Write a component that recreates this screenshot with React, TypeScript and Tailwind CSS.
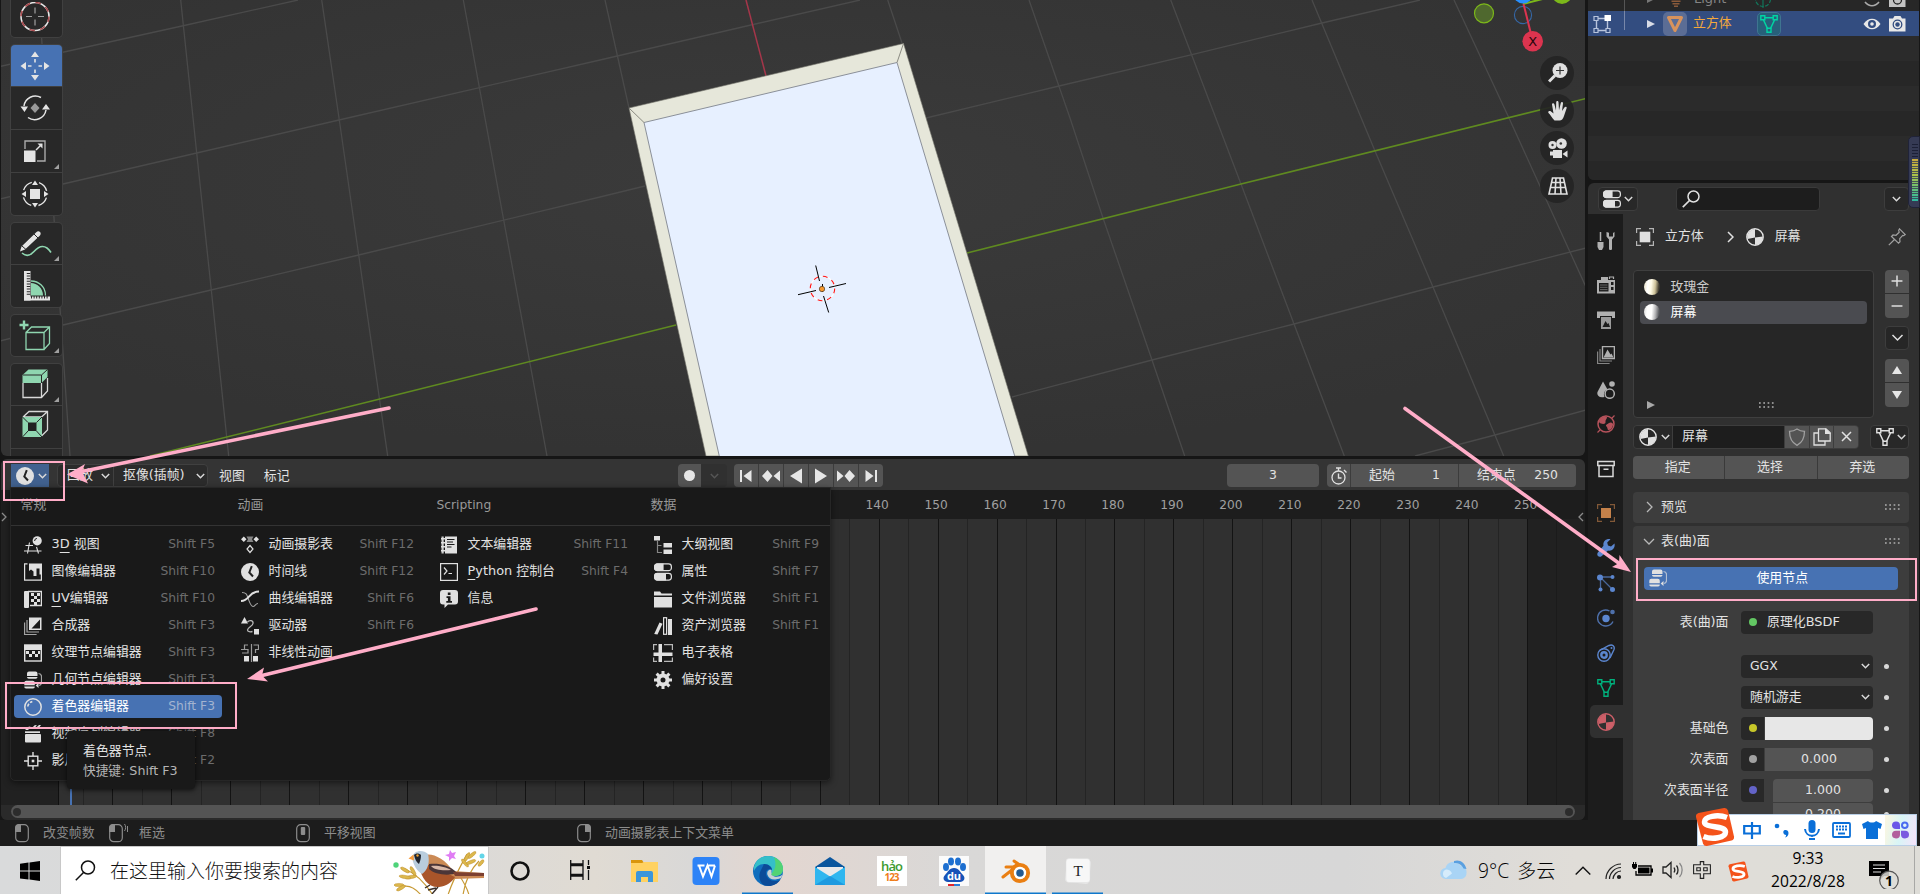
import React from "react";
import type { ReactNode } from "react";

type IconProps = { children: ReactNode; size?: number; className?: string };

function Icon({ children, size = 18, className = "text-[#e0e0e0]" }: IconProps) {
  return (
    <svg width={size} height={size} viewBox="0 0 18 18" fill="currentColor" className={`shrink-0 ${className}`}>
      {children}
    </svg>
  );
}

const line = { fill: "none", stroke: "currentColor", strokeWidth: 1.2 } as const;

function Chevron({ className = "text-[#d8d8d8]" }: { className?: string }) {
  return (
    <svg width="9" height="6" viewBox="0 0 9 6" className={`shrink-0 ${className}`}>
      <path d="M.8 1l3.700 3.700L8.200 1" fill="none" stroke="currentColor" strokeWidth="1.500" />
    </svg>
  );
}

/* ---------- editor icons ---------- */

const NodesIcon = () => (
  <Icon>
    <path d="M5 .5h6.500a2 2 0 012 2V5H3V2.500a2 2 0 012-2zM3 6h10.500a1.800 1.800 0 01-1.800 1.800H4.800A1.800 1.800 0 013 6z" />
    <path d="M2.300 9.800h6.500a2 2 0 012 2v2.500H.3v-2.500a2 2 0 012-2zM.3 15.400h10.500A1.800 1.800 0 019 17.400H2.100a1.800 1.800 0 01-1.800-2z" />
    <path d="M14.500 2.500c2 .2 3 1.200 3 3v6c0 1.800-1 2.700-2.500 3" {...line} strokeWidth="1.200" opacity=".7" />
    <path d="M14.500 12v5l-2.800-2.500z" />
  </Icon>
);

const PropertiesIcon = () => (
  <Icon>
    <rect x="0.600" y="0.900" width="16.800" height="6.800" rx="2.800" {...line} />
    <path d="M3.400.6h6.200v7.400H3.400A3 3 0 010 5V3.600A3 3 0 013.400.6z" />
    <rect x="0.600" y="10.300" width="16.800" height="6.800" rx="2.800" {...line} />
    <path d="M3.400 10h8.600v7.400H3.400A3 3 0 010 14.400V13a3 3 0 013.400-3z" />
  </Icon>
);

const ClockIcon = () => (
  <Icon>
    <circle cx="9" cy="9" r="9" />
    <path d="M10.800 3.200L8.300 9.500l3.700 4" fill="none" stroke="#222" strokeWidth="2" />
  </Icon>
);

const MaterialIcon = ({ className }: { className?: string }) => (
  <Icon className={className}>
    <circle cx="9" cy="9" r="8.200" {...line} strokeWidth="1.400" />
    <path d="M9 1v8.500L1.500 11A8.200 8.200 0 019 1zM9 9.500l8-1A8.200 8.200 0 019 17z" />
  </Icon>
);

const MeshIcon = ({ className }: { className?: string }) => (
  <Icon className={className}>
    <path d="M4.500 2.800h9M3.500 5l4 8.500M14.500 5l-4 8.500" {...line} strokeWidth="1.500" />
    <path d="M.8.8h4v4h-4zM13.200.8h4v4h-4zM7 13.200h4v4H7z" {...line} strokeWidth="1.400" />
  </Icon>
);

const ObjectIcon = ({ className }: { className?: string }) => (
  <Icon className={className}>
    <rect x="3.700" y="3.700" width="10.600" height="10.600" />
    <path d="M.6 5V.6H5M13 .6h4.400V5M17.400 13v4.400H13M5 17.400H.6V13" {...line} opacity=".75" />
  </Icon>
);

const MENU_ICONS: Record<string, ReactNode> = {
  view3d: (
    <Icon>
      <path d="M1.500 9.500H9M0 15h17.500M5.500 6.500L3.500 17.500M12.500 11l2 6.500" {...line} strokeWidth="1.100" />
      <circle cx="13.200" cy="4.800" r="4.600" />
      <path d="M10.600 5a2.600 2.600 0 012.300-2.600" fill="none" stroke="#191919" strokeWidth="1" />
    </Icon>
  ),
  image: (
    <Icon>
      <path d="M3.500.8H.6v16.400h16.800V11" {...line} />
      <path d="M5 .5h13v11h-2.500V5.500h-3V13H9.500V8.500L7 6.500 5 8z" />
    </Icon>
  ),
  uv: (
    <Icon>
      <rect x="0" y="1" width="5" height="17" rx="1" />
      <path d="M4 1.500h13.400v14H6" {...line} strokeWidth="1.300" />
      <path d="M7 3h3v3H7zM13 3h3v3h-3zM10 6h3v3h-3zM7 9h3v3H7zM13 9h3v3h-3zM10 12h3v3h-3z" />
    </Icon>
  ),
  comp: (
    <Icon>
      <path d="M5 .5h12.500V13H5z" />
      <path d="M7.500 11.500l8.500-9v9z" fill="#191919" />
      <path d="M3 3v12h12M.6 5.500v12h12" {...line} opacity=".7" />
    </Icon>
  ),
  texture: (
    <Icon>
      <rect x="0.700" y="1" width="16.600" height="16" {...line} strokeWidth="1.400" />
      <rect x="1" y="1" width="16" height="5" />
      <path d="M2 7h3v3H2zM8 7h3v3H8zM14 7h2v3h-2zM5 10h3v3H5zM11 10h3v3h-3z" />
    </Icon>
  ),
  geo: <NodesIcon />,
  shader: (
    <Icon>
      <circle cx="9" cy="9" r="8.200" {...line} strokeWidth="1.500" />
      <path d="M3.800 8.500A5.500 5.500 0 018.300 3.700" {...line} strokeWidth="1.700" strokeDasharray="3 1.500" />
    </Icon>
  ),
  video: (
    <Icon>
      <path d="M1 5l4-3.500 2 .5L4 5zM7 3.800L11 0l2 .5L9 4zM12 2.800L15 0h2l-2 2.800z" />
      <rect x="1" y="6.300" width="15" height="1.700" />
      <rect x="1" y="9" width="16" height="8.500" rx="1" />
    </Icon>
  ),
  clip: (
    <Icon>
      <rect x="4.200" y="4.200" width="9.600" height="9.600" {...line} strokeWidth="1.400" />
      <path d="M9 0v4M9 14v4M0 9h4M14 9h4" {...line} strokeWidth="1.400" />
      <rect x="7.700" y="7.700" width="2.600" height="2.600" />
    </Icon>
  ),
  dope: (
    <Icon>
      <path d="M2.800.5l2.700 2.800L2.800 6 0 3.300zM15.200.5L18 3.300 15.200 6l-2.700-2.700z" />
      <path d="M5.500.5h7l-1.500 2.800L12.500 6h-7L7 3.300z" opacity=".55" />
      <path d="M9 9.500l3 3.500-3 3.500L6 13z" {...line} />
    </Icon>
  ),
  clock: <ClockIcon />,
  graph: (
    <Icon>
      <path d="M0 11c9 0 7-9.500 18-9.500" {...line} strokeWidth="2" />
      <path d="M1 2.500c5 0 5 3 6.500 7S10 16.500 12 16.500s2.500-3 5-3" {...line} strokeWidth="1.100" opacity=".7" />
    </Icon>
  ),
  driver: (
    <Icon>
      <path d="M3.500 0L7 6.500H0z" />
      <rect x="13" y="12" width="5" height="5.500" />
      <path d="M6.500 5c2-2.500 6-1.500 5.500 1.500-.4 2.600-5.500 4-5.500 6.500 0 2 3 2 5 1.500" {...line} strokeWidth="1.300" opacity=".8" />
    </Icon>
  ),
  nla: (
    <Icon>
      <path d="M7 1H3.500v4M0 5.500h7V9H1M10.500 0v18M12.500 1h5v4.500h-3V9" {...line} opacity=".65" />
      <path d="M3 12h5v5.500H3zM12 12h5v5.500h-5z" />
    </Icon>
  ),
  text: (
    <Icon>
      <path d="M1.500.5h2.200v17H1.500z" opacity=".9" />
      <path d="M1 2h4v1.500H1zM1 6h4v1.500H1zM1 10h4v1.500H1zM1 14h4v1.500H1z" />
      <path d="M5 .5h12v17H5z" />
      <path d="M7 3.500h7.500M7 6h6M7 8.500h7.500M7 11h4.500" stroke="#191919" strokeWidth="1" />
    </Icon>
  ),
  python: (
    <Icon>
      <rect x="0.600" y="0.600" width="16.800" height="16.800" {...line} />
      <path d="M4 4.500L7 8l-3 3.500M8.500 10.500H12" {...line} />
    </Icon>
  ),
  info: (
    <Icon>
      <path d="M3 0h12a3 3 0 013 3v8.500a3 3 0 01-3 3H8L4.500 18v-3.500H3a3 3 0 01-3-3V3a3 3 0 013-3z" />
      <path d="M7.800 2.500h2.700V5H7.800zM6.500 6.300h4v4.700H12v1.700H6.300V11h1.600V8H6.500z" fill="#191919" />
    </Icon>
  ),
  outliner: (
    <Icon>
      <path d="M0 0h6v4.500H0zM9.500 7H18v4.500H9.500zM9.500 13.500H18V18H9.500z" />
      <path d="M3.500 5v11.500h4.500M3.500 9.500h4" {...line} opacity=".55" />
    </Icon>
  ),
  properties: <PropertiesIcon />,
  files: (
    <Icon>
      <path d="M0 1.500h6l1.500 2H18v2H0zM0 7h18v10.500H0z" />
    </Icon>
  ),
  assets: (
    <Icon>
      <path d="M5.500 5.500l3 1.300L3.500 17.500l-3.300-.5zM14 2h4v16h-4z" />
      <rect x="9.600" y="0.700" width="3" height="16.600" {...line} />
    </Icon>
  ),
  sheet: (
    <svg width="20" height="18" viewBox="-1 0 20 18" fill="currentColor" className="-mx-px shrink-0 text-[#e0e0e0]">
      <path d="M4.500 0H8v18H4.500zM-.5 8.500h19V12h-19z" />
      <path d="M3 .6H-.4V6M10 .6h8.400V6M3 17.400H-.4v-4M10 17.400h8.400v-4" {...line} opacity=".8" />
    </svg>
  ),
  gear: (
    <Icon>
      <circle cx="9" cy="9" r="4.500" fill="none" stroke="currentColor" strokeWidth="4" />
      <path
        d="M9 0v4M9 14v4M0 9h4M14 9h4M2.600 2.600l3 3M12.400 12.400l3 3M15.400 2.600l-3 3M5.600 12.400l-3 3"
        stroke="currentColor"
        strokeWidth="3"
      />
    </Icon>
  ),
};

/* ---------- 3D viewport ---------- */

function Scene() {
  return (
    <svg width="1584" height="456" viewBox="1 0 1584 456" className="block">
      <defs>
        <radialGradient id="bg" cx="0.5" cy="0.4" r="0.6">
          <stop offset="0" stopColor="#3b3b3b" />
          <stop offset="1" stopColor="#333333" />
        </radialGradient>
      </defs>
      <rect width="1586" height="456" fill="url(#bg)" />
      <g fill="none" stroke="#4a4a4a" strokeWidth="1.300">
        <path d="M39 0L54 218 60 308 70 456M180.700 0L196.700 153 211.300 290 228.700 456M321.700 0L339.300 120 358.700 255 387.700 456M463.300 0L547 456" />
        <path d="M605 0L629 108M887.700 0L902 43M1029 0L1070 118 1103 218 1152 360 1184.700 456M1170.700 0L1241 184 1294 324 1344.300 456M1312 0L1375 151 1433 287 1503.700 456M1454 0L1509 118 1570 252 1586 287" />
        <path d="M0 66.500L64 52 182 26 298 0M0 199L63 184 196.700 153 339 120 600 60 751 25 860 0M0 341L63 325 211 290 358.700 255 600 197 645 186M926 118L1059 86 1192 54.600 1322 23 1420 0M1012 397L1152 360 1294 324 1433 287 1586 248M1415 456L1495 435 1586 410" />
      </g>
      <path d="M150 456L400 394 676 325M967 253L1241 184 1586 98.500" fill="none" stroke="#5f8a20" strokeWidth="1.600" />
      <path d="M746 0L766 76" stroke="#a5364a" strokeWidth="1.500" />
      <path d="M629 108L903.500 43.500 1028.300 456H706z" fill="#e6e7da" stroke="#77776f" strokeWidth=".6" />
      <path d="M644 122.500L897 62.500 1015 457H719.500z" fill="#e7f0ff" stroke="#8b9099" strokeWidth="1" />
      <path d="M629 108L644 122.500M903.500 43.500L897 62.500" stroke="#8b8b82" strokeWidth="1" />
      <circle cx="822.500" cy="288.500" r="12.200" fill="none" stroke="#fff" strokeWidth="1.100" />
      <circle cx="822.500" cy="288.500" r="12.200" fill="none" stroke="#ff1414" strokeWidth="1.100" strokeDasharray="4.790" />
      <path d="M815.700 265.500L819.500 281M823.500 296L828.700 312.500M846 283.500L829 287.500M816 290.500L798 294.700M822.500 284v8" stroke="#000" strokeWidth="1" />
      <circle cx="822" cy="289" r="2.700" fill="#f6982d" stroke="#4b3a25" strokeWidth=".7" />
      {/* axis gizmo */}
      <circle cx="1484" cy="13.300" r="9.500" fill="#4f682e" stroke="#7cb81a" strokeWidth="1.200" />
      <circle cx="1523" cy="15" r="8.600" fill="none" stroke="#3567a6" strokeWidth="1.100" />
      <path d="M1523 4L1562 -6" stroke="#7cb81a" strokeWidth="2" />
      <circle cx="1562" cy="-6" r="10" fill="#7cb81a" />
      <circle cx="1523" cy="-6.500" r="10" fill="#2890ff" />
      <path d="M1523.500 4L1530.500 32" stroke="#dc3450" strokeWidth="2" />
      <circle cx="1532.700" cy="41.300" r="10.300" fill="#dc344f" />
      <text x="1532.700" y="46" textAnchor="middle" fontSize="13" fontFamily="DejaVu Sans, sans-serif" fill="#29060c">
        X
      </text>
    </svg>
  );
}

const TOOL_GROUPS: { key: string; more?: boolean; active?: boolean; art: ReactNode }[][] = [
  [
    {
      key: "move",
      active: true,
      art: (
        <g fill="#e4e4e4">
          <path d="M15 .5l4 5.500h-8zM15 29.500l4-5.500h-8zM.5 15L6 11v8zM29.500 15L24 11v8zM14.200 8h1.600v3.500h-1.600zM14.200 18.500h1.600V22h-1.600zM8 14.200h3.500v1.600H8zM18.500 14.200H22v1.600h-3.500z" />
        </g>
      ),
    },
    {
      key: "rotate",
      art: (
        <g>
          <path d="M4 13a11.500 11.500 0 0117-8.500M26 17a11.500 11.500 0 01-18 7.500" fill="none" stroke="#e4e4e4" strokeWidth="1.500" />
          <path d="M15 10l4.500 5-4.500 5-4.500-5z" fill="#999" />
          <path d="M4.500 19L.5 13.500h7.500zM26 11l4 5.500h-8z" fill="#e4e4e4" />
        </g>
      ),
    },
    {
      key: "scale",
      more: true,
      art: (
        <g>
          <path d="M5 13V5h20v20h-8" fill="none" stroke="#aaa" strokeWidth="1.400" />
          <rect x="4" y="14.500" width="11.500" height="11.500" fill="#e4e4e4" />
          <path d="M16 14l5-5" stroke="#e4e4e4" strokeWidth="1.500" />
          <path d="M22.500 7.500v5l-5-5z" fill="#e4e4e4" />
        </g>
      ),
    },
    {
      key: "transform",
      art: (
        <g>
          <circle cx="15" cy="15" r="12" fill="none" stroke="#e4e4e4" strokeWidth="1.400" strokeDasharray="11.500 7.350" strokeDashoffset="-3.700" />
          <rect x="10" y="10" width="10" height="10" fill="#e4e4e4" />
          <path d="M15 1.500l3 4.500h-6zM15 28.500l3-4.500h-6zM1.500 15L6 12v6zM28.500 15L24 12v6z" fill="#e4e4e4" />
        </g>
      ),
    },
  ],
  [
    {
      key: "annotate",
      more: true,
      art: (
        <g>
          <path d="M0 22.500l1.500-5L16 3.500c1.500-1.500 3-1.500 4-.5s1 2.500-.5 4L5 20.500z" fill="#e4e4e4" />
          <path d="M14 5l4 4M2 17l4 3.500" stroke="#282828" strokeWidth="1" />
          <path d="M2 24c4 3.500 8 3 12-1.500s8-7 13-3.500c2 1.500 3 3 4 4.500" fill="none" stroke="#8fd6b0" strokeWidth="1.600" />
        </g>
      ),
    },
    {
      key: "measure",
      art: (
        <g>
          <path d="M4 0h6.500v29.500H4z" fill="#e4e4e4" />
          <path d="M4 25.500h26v4H4z" fill="#e4e4e4" />
          <path d="M8.500 2v22" stroke="#282828" strokeWidth="3.500" strokeDasharray="1 1.600" />
          <path d="M11 26h17" stroke="#282828" strokeWidth="3" strokeDasharray="1 1.600" />
          <path d="M11 12c6 0 12 5 12 12.500H11z" fill="#8fd6b0" />
          <path d="M11 10c8 0 14.500 6 14.500 14.500" fill="none" stroke="#8fd6b0" strokeWidth="1.300" />
        </g>
      ),
    },
  ],
  [
    {
      key: "add",
      more: true,
      art: (
        <g fill="none" stroke="#8fd6b0">
          <path d="M4 -.500v9M-.5 4h9" strokeWidth="2.400" />
          <path d="M6 11.500h18v17H6zM6 11.500L11.500 6h18v16.500L24 28.500M24 11.500L29.500 6" strokeWidth="1.300" />
        </g>
      ),
    },
  ],
  [
    {
      key: "extrude",
      more: true,
      art: (
        <g>
          <path d="M3 13v14.500h18.500l6-6.500V8M21.500 13v14.500" fill="none" stroke="#d8d8d8" strokeWidth="1.300" />
          <path d="M2.500 5l6-5.500h19v7.500L21.500 13h-19z" fill="#8fd6b0" />
          <path d="M3 5h18.500v8M21.500 5l6-5.500" fill="none" stroke="#282828" strokeWidth="1" />
        </g>
      ),
    },
    {
      key: "inset",
      art: (
        <g>
          <path d="M3 5l6-5.500h18.500V18l-6 6M21.500 5l6-5.500M3 5h18.500" fill="none" stroke="#d8d8d8" strokeWidth="1.300" />
          <path d="M2.500 5H22v20H2.500z" fill="#8fd6b0" />
          <path d="M8 10.500h8.500V19H8z" fill="#222" />
          <path d="M2.500 5L8 10.500M22 5l-5.500 5.500M2.500 25L8 19M22 25l-5.500-6" stroke="#282828" />
        </g>
      ),
    },
    { key: "bevel", art: null },
  ],
];

function ToolButton({ active, more, art }: { active?: boolean; more?: boolean; art: ReactNode }) {
  return (
    <div className={`relative flex h-[42px] w-[51px] shrink-0 items-center justify-center first:h-[41px] ${active ? "bg-[#4772b3]" : "bg-[#282828]"}`}>
      <svg width="30" height="30" viewBox="0 0 30 30" className="mr-[3px] overflow-visible">
        {art}
      </svg>
      {more && (
        <svg width="5" height="5" className="absolute right-[3px] bottom-[3px]">
          <path d="M5 0v5H0z" fill="#a0a0a0" />
        </svg>
      )}
    </div>
  );
}

function Viewport() {
  return (
    <section className="relative ml-px h-[456px] w-[1584px] overflow-hidden rounded-b-md">
      <Scene />
      <div className="absolute left-[10px] -top-[4px] flex flex-col gap-[8px]">
        <div className="flex h-[41px] w-[51px] items-center justify-center rounded-b-[4px] bg-[#282828] shadow-[0_0_0_1px_#404040]">
          <svg width="30" height="30" viewBox="0 0 30 30" className="mr-[3px]">
            <circle cx="15" cy="14.500" r="14" fill="none" stroke="#e8e8e8" strokeWidth="1.600" />
            <circle cx="15" cy="14.500" r="14" fill="none" stroke="#a9494d" strokeWidth="1.600" strokeDasharray="5.500" />
            <path d="M15 5.500v6M15 17.500v6M6 14.500h6M18 14.500h6" stroke="#a0a0a0" strokeWidth="1.200" />
          </svg>
        </div>
        {TOOL_GROUPS.map((group, i) => (
          <div key={i} className="flex flex-col gap-px overflow-hidden rounded-[4px] bg-[#404040] shadow-[0_0_0_1px_#404040]">
            {group.map((t) => (
              <ToolButton key={t.key} active={t.active} more={t.more} art={t.art} />
            ))}
          </div>
        ))}
      </div>
      <div className="absolute left-[1539px] top-[56px] flex flex-col gap-[3.500px]">
        {[
          <g key="z">
            <circle cx="12" cy="7.500" r="7.500" />
            <path d="M7 12.500L1 18.500" stroke="currentColor" strokeWidth="3" />
            <path d="M12 3.500v8M8 7.500h8" stroke="#333" strokeWidth="1.200" />
          </g>,
          <path
            key="h"
            d="M6.500 19.500C4 17 2.500 13.500.5 12c-1-1.500 1-2.500 2.500-1.500l2.500 2L4 3.500c0-1.600 2-1.800 2.400-.3L8 9.500 8.200 1.200c.1-1.500 2.200-1.500 2.300 0L11 9.300l1.800-7.300c.4-1.500 2.400-1 2.200.5l-1 7.500 2.600-3.700c.9-1.300 2.600-.4 2 1L16 15c-1 3-2.500 4.500-4.500 4.500z"
          />,
          <g key="c">
            <circle cx="4.500" cy="7" r="4" />
            <circle cx="13.500" cy="5.500" r="5.300" />
            <circle cx="4.500" cy="7" r="1.200" fill="#333" />
            <circle cx="12.800" cy="5.500" r="1.300" fill="#333" />
            <path d="M5 12h9v8H5zM2 13.500h3v4H2zM14.500 16l5-3.500v7z" />
          </g>,
          <path
            key="p"
            d="M4.500 2h11l3.500 16H1zM3.700 6.500h12.600M2.500 11.500h15M8 2L7 18M12 2l1 16"
            fill="none"
            stroke="currentColor"
            strokeWidth="1.600"
          />,
        ].map((g, i) => (
          <div key={i} className="flex size-[34px] items-center justify-center rounded-full bg-[#232323]/90 text-[#e0e0e0]">
            <svg width="20" height="20" viewBox="0 0 20 20" fill="currentColor" className="ml-px">
              {g}
            </svg>
          </div>
        ))}
      </div>
    </section>
  );
}

/* ---------- timeline ---------- */

const TRANSPORT: ReactNode[] = [
  <path key="a" d="M3 3h2v12H3zM14.500 3v12L6.500 9z" />,
  <path key="b" d="M5.500 3l5 6-5 6L0 9zM18 3.500v11L11.500 9z" />,
  <path key="c" d="M15 1.500v15L3 9z" />,
  <path key="d" d="M3 1.500v15L15 9z" />,
  <path key="e" d="M12.500 3l5.500 6-5.500 6-5-6zM0 3.500v11L6.500 9z" />,
  <path key="f" d="M13 3h2v12h-2zM3.500 3v12l8-6z" />,
];

function TimelineHeader() {
  return (
    <div className="flex h-[31px] shrink-0 items-start bg-[#343434] pt-[5px] text-[12.900px]">
      <div className="ml-[10px] flex h-[23px] w-[38px] items-center gap-[4px] bg-[#41618f] pl-[5px]">
        <ClockIcon />
        <Chevron />
      </div>
      <div className="ml-[8px] flex h-[23px] w-[151px] items-center rounded-[4px] border border-[#404040] bg-[#2b2b2b]">
        <div className="flex h-full w-[56px] items-center justify-between border-r border-[#404040] pl-[9px] pr-[3px]">
          回放
          <Chevron />
        </div>
        <div className="flex flex-1 items-center justify-between whitespace-nowrap pl-[9px] pr-[2px]">
          抠像(插帧)
          <Chevron />
        </div>
      </div>
      <span className="ml-[11px] leading-[23px]">视图</span>
      <span className="ml-[19px] leading-[23px]">标记</span>
      <div className="ml-auto flex h-[23px] w-[49px] overflow-hidden rounded-[4px] bg-[#303030]">
        <div className="flex w-[23px] items-center justify-center bg-[#545454]">
          <div className="size-[11px] rounded-full bg-[#e6e6e6]" />
        </div>
        <div className="flex flex-1 items-center justify-center">
          <Chevron className="text-[#555]" />
        </div>
      </div>
      <div className="ml-[7px] flex h-[23px] w-[149px] gap-px overflow-hidden rounded-[4px] bg-[#3c3c3c]">
        {TRANSPORT.map((g, i) => (
          <div key={i} className="flex flex-1 items-center justify-center bg-[#545454]">
            <Icon className="text-[#e6e6e6]">{g}</Icon>
          </div>
        ))}
      </div>
      <div className="ml-[344px] flex h-[23px] w-[92px] items-center justify-center rounded-[4px] bg-[#545454] text-[12.400px]">3</div>
      <div className="ml-[8px] mr-[9px] flex h-[23px] w-[249px] gap-px overflow-hidden rounded-[4px] bg-[#3c3c3c]">
        <div className="flex w-[23px] items-center justify-center bg-[#545454]">
          <Icon>
            <circle cx="8.500" cy="10.500" r="6.500" {...line} strokeWidth="1.300" />
            <path d="M8.500 6.500v4.500h3M6 1h5M8.500 1v3M14 3l2.500 2.500" {...line} strokeWidth="1.400" />
          </Icon>
        </div>
        <div className="flex w-[107px] items-center justify-between bg-[#545454] pl-[18px] pr-[18px]">
          <span>起始</span>
          <span className="text-[12.400px]">1</span>
        </div>
        <div className="flex flex-1 items-center justify-between bg-[#545454] px-[18px]">
          <span>结束点</span>
          <span className="text-[12.400px]">250</span>
        </div>
      </div>
    </div>
  );
}

const FRAME_MARKS = Array.from({ length: 25 }, (_, i) => (i + 1) * 10);
const FIRST_LABEL = 13;

function TimelineTracks() {
  return (
    <div className="flex min-h-0 flex-1 flex-col bg-[#1d1d1d]">
      <div className="flex h-[29px] shrink-0 items-center pl-[846.600px] pt-[2px] text-[12.200px] text-[#a0a0a0]">
        {FRAME_MARKS.slice(FIRST_LABEL).map((n) => (
          <span key={n} className="w-[58.970px] shrink-0 text-center">
            {n}
          </span>
        ))}
      </div>
      <div className="flex min-h-0 flex-1 flex-col justify-end bg-[#212121]">
        <svg width="1584" height="300" viewBox="1 0 1584 300" className="block min-h-0 flex-1" preserveAspectRatio="xMinYMin slice">
          <rect x="58.500" width="1469" height="300" fill="#303030" />
          {FRAME_MARKS.map((n, i) => (
            <g key={n}>
              <rect x={Math.round(82.8 + i * 58.97)} width="1" height="300" fill="#242424" />
              <rect x={Math.round(112 + i * 58.97)} width="1" height="300" fill="#131313" />
            </g>
          ))}
          <rect x="58" width="1" height="300" fill="#101010" />
          <rect x="1556" width="1" height="300" fill="#1b1b1b" />
          <rect x="70" width="2" height="300" fill="#4772b3" />
        </svg>
        <div className="flex h-[15px] shrink-0 items-start bg-[#2a2a2a] px-[10px]">
          <div className="flex h-[13px] flex-1 items-center justify-between rounded-full bg-[#545454] px-[2px]">
            <div className="size-[8px] rounded-full bg-[#2c2c2c]" />
            <div className="size-[8px] rounded-full bg-[#2c2c2c]" />
          </div>
        </div>
      </div>
    </div>
  );
}

type MenuItem = { icon: string; label: ReactNode; keys?: string; active?: boolean };

const MENU: { title: string; width: string; items: MenuItem[] }[] = [
  {
    title: "常规",
    width: "w-[208px]",
    items: [
      { icon: "view3d", label: <>3<u className="underline-offset-4">D</u> 视图</>, keys: "Shift F5" },
      { icon: "image", label: "图像编辑器", keys: "Shift F10" },
      { icon: "uv", label: <><u className="underline-offset-4">U</u>V编辑器</>, keys: "Shift F10" },
      { icon: "comp", label: "合成器", keys: "Shift F3" },
      { icon: "texture", label: "纹理节点编辑器", keys: "Shift F3" },
      { icon: "geo", label: "几何节点编辑器", keys: "Shift F3" },
      { icon: "shader", label: "着色器编辑器", keys: "Shift F3", active: true },
      { icon: "video", label: "视频序列编辑器", keys: "Shift F8" },
      { icon: "clip", label: "影片剪辑编辑器", keys: "Shift F2" },
    ],
  },
  {
    title: "动画",
    width: "w-[190px]",
    items: [
      { icon: "dope", label: "动画摄影表", keys: "Shift F12" },
      { icon: "clock", label: "时间线", keys: "Shift F12" },
      { icon: "graph", label: "曲线编辑器", keys: "Shift F6" },
      { icon: "driver", label: "驱动器", keys: "Shift F6" },
      { icon: "nla", label: "非线性动画" },
    ],
  },
  {
    title: "Scripting",
    width: "w-[205px]",
    items: [
      { icon: "text", label: "文本编辑器", keys: "Shift F11" },
      { icon: "python", label: <><u className="underline-offset-4">P</u>ython 控制台</>, keys: "Shift F4" },
      { icon: "info", label: "信息" },
    ],
  },
  {
    title: "数据",
    width: "w-[182px]",
    items: [
      { icon: "outliner", label: "大纲视图", keys: "Shift F9" },
      { icon: "properties", label: "属性", keys: "Shift F7" },
      { icon: "files", label: "文件浏览器", keys: "Shift F1" },
      { icon: "assets", label: "资产浏览器", keys: "Shift F1" },
      { icon: "sheet", label: "电子表格" },
      { icon: "gear", label: "偏好设置" },
    ],
  },
];

function EditorMenu() {
  return (
    <div className="absolute left-[10px] top-[487px] h-[294px] w-[821px] rounded-b-[5px] border border-[#262626] bg-[#191919] shadow-[0_2px_6px_rgba(0,0,0,.5)]">
      <div className="flex h-[38px] items-center gap-[9px] border-b border-[#333] pb-[3px] pl-[3px] text-[#989898]">
        {MENU.map((c) => (
          <div key={c.title} className={`${c.width} shrink-0 pl-[6.500px] ${c.title === "Scripting" ? "text-[12.300px]" : "text-[12.900px]"}`}>
            {c.title}
          </div>
        ))}
      </div>
      <div className="flex items-start gap-[9px] pl-[3px] pt-[7px]">
        {MENU.map((c) => (
          <div key={c.title} className={`${c.width} flex shrink-0 flex-col gap-[4px]`}>
            {c.items.map((it) => (
              <div key={it.icon} className={`flex h-[23px] items-center rounded-[4px] pl-[10px] pr-[7px] ${it.active ? "bg-[#4772b3] text-white" : ""}`}>
                {MENU_ICONS[it.icon]}
                <span className="ml-[9.500px] whitespace-nowrap text-[12.900px]">{it.label}</span>
                <span className={`ml-auto text-[12.300px] ${it.active ? "text-[#a3b4d0]" : "text-[#6c6c6c]"}`}>{it.keys}</span>
              </div>
            ))}
          </div>
        ))}
      </div>
    </div>
  );
}

/* ---------- outliner ---------- */

function Outliner() {
  return (
    <section className="h-[180px] overflow-hidden rounded-b-md bg-[#282828]">
      <div className="flex h-[11px] items-end bg-[#272727]">
        <div className="flex h-[25px] w-full shrink-0 items-center">
          <span className="ml-[36px] h-full w-px bg-[#555]" />
          <svg width="8" height="8" className="ml-[22px]"><path d="M0 0l8 4-8 4z" fill="#777" /></svg>
          <Icon className="ml-[12px] text-[#8a5a3b]"><path d="M4 2a5.500 5.500 0 0110 0c0 4-2 5-2.500 7h-5C6 7 4 6 4 2zM4.500 10.500h9V12h-9zM5.500 13h7v1.500h-7zM7 15.500h4V17H7z" /></Icon>
          <span className="ml-[9px] text-[13px] text-[#848484]">Light</span>
          <Icon className="ml-[28px] text-[#12755a]"><circle cx="9" cy="9" r="7.500" {...line} strokeDasharray="4 1.500" /><path d="M9 0v18" {...line} /></Icon>
          <Icon className="ml-[91px] text-[#aaa]"><path d="M2 12c4 5 10 5 14 0" {...line} strokeWidth="1.600" /></Icon>
          <Icon className="ml-[7px] text-[#c4c4c4]"><path d="M1 3h16.500v14H1z" /><circle cx="9.500" cy="10" r="4" fill="none" stroke="#222" strokeWidth="1.300" /></Icon>
        </div>
      </div>
      <div className="flex h-[25px] items-center bg-[#334d80]">
        <Icon className="ml-[5px] text-[#b8c4dc]">
          <path d="M3.500 5v9M5 3.500h7M5 15.500h8M14.500 6v8" {...line} strokeWidth="1.400" />
          <path d="M1 1.500h4v4H1zM1 13.500h4v4H1zM13 13.500h4v4h-4z" {...line} />
          <rect x="11.500" y="0" width="6.500" height="6" fill="#fff" />
        </Icon>
        <span className="ml-[13px] h-[19px] w-px self-start bg-[#7888aa]" />
        <svg width="8" height="8" className="ml-[22px]"><path d="M0 0l8 4-8 4z" fill="#d8dce6" /></svg>
        <div className="ml-[8px] flex size-[24px] items-center justify-center rounded-[5px] bg-[#5b6d95]">
          <Icon className="text-[#d8935c]"><path d="M2.500 2.500h13L9 15.500z" fill="none" stroke="currentColor" strokeWidth="3" strokeLinejoin="round" /></Icon>
        </div>
        <span className="ml-[6px] text-[12.900px] text-[#f5a93b]">立方体</span>
        <div className="ml-[25px] flex size-[24px] items-center justify-center rounded-[5px] border border-[#3f7590] bg-[#27607a]">
          <MeshIcon className="text-[#00d5a3]" />
        </div>
        <Icon className="ml-[82px] text-[#e8e8e8]">
          <path d="M.5 9C5 2 13 2 17.500 9 13 16 5 16 .5 9z" />
          <circle cx="9" cy="9" r="4" fill="#334d80" />
          <circle cx="9" cy="9" r="1.800" />
        </Icon>
        <Icon className="ml-[7px] text-[#e8e8e8]">
          <path d="M1 3.500h4L6.500 1h6L14 3.500h3.500v13H1z" />
          <circle cx="9.500" cy="9.500" r="4.300" fill="none" stroke="#334d80" strokeWidth="1.300" />
          <circle cx="9.500" cy="9.500" r="2.200" fill="#334d80" />
        </Icon>
      </div>
      <div className="h-[25px] bg-[#2b2b2b]" />
      <div className="h-[25px] bg-[#272727]" />
      <div className="h-[25px] bg-[#2b2b2b]" />
      <div className="h-[25px] bg-[#272727]" />
      <div className="h-[25px] bg-[#2b2b2b]" />
      <div className="h-[25px] bg-[#272727]" />
    </section>
  );
}

/* ---------- properties editor ---------- */

const TABS: { key: string; color: string; space?: string; art: ReactNode }[] = [
  { key: "tool", color: "text-[#b0b0b0]", art: <><path d="M3.500 0v9" {...line} strokeWidth="1.500" /><path d="M.5 10h6v5l-1.500 3H2L.5 15z" /><path d="M9.500 0v4.500l2.500 3V17c0 1.300 3 1.300 3 0V7.500l2.500-3V0L16 1v3.500h-4V.8z" /></> },
  { key: "render", color: "text-[#b0b0b0]", space: "mt-[9px]", art: <><path d="M0 4h18v13.500H0zM4 1h7v3H4z" /><path d="M2 7h9.500v8.500H2z" fill="#1c1c1c" /><path d="M3 9h7.500M3 11.300h7.500M3 13.600h7.500" stroke="currentColor" opacity=".5" /><path d="M14 6h2.500v3H14zM14 11h2.500v3H14z" fill="#1c1c1c" /><path d="M12.500 3V1h4v2" {...line} /></> },
  { key: "output", color: "text-[#b0b0b0]", art: <><path d="M0 .5h18v6.500h-3V5H3v2H0z" /><path d="M4 6h10v12H4z" opacity=".85" /><path d="M5.500 16l3-6 2 3 1-1 1.500 4z" fill="#1c1c1c" /></> },
  { key: "layer", color: "text-[#b0b0b0]", art: <><path d="M5.500.6h11.900v11.900H5.500z" {...line} strokeWidth="1.400" /><path d="M6.500 11.500l4-8 3 5 1-1 2 4z" /><path d="M3 3v12h12M.6 5.500v12h12" {...line} opacity=".7" /></> },
  { key: "scene", color: "text-[#b0b0b0]", art: <><path d="M6 .5l4.500 8c-3 1-4.500 4-3 7.500C2 17.500-.500 14 .5 11z" /><circle cx="15" cy="3" r="2.800" /><circle cx="12.700" cy="12.700" r="4.600" {...line} strokeWidth="1.500" /></> },
  { key: "world", color: "text-[#b5525b]", art: <><circle cx="9" cy="9" r="8" {...line} strokeWidth="1.500" /><path d="M3 4c3-3 7-3 7-1.500S8 5 8.500 7 6 9.500 4 8.500 1.500 7 3 4zM12 8c2-1.500 4.500 0 4 2s-2 5-4 5-1-2-2.500-3.500S10 9.500 12 8z" /><path d="M15 3l2.500-2.500M3 15L.5 17.500" {...line} /></> },
  { key: "collection", color: "text-[#d8d8d8]", space: "mt-[10px]", art: <><path d="M.8 1.500h16.400v4H.8zM2 5.500h14v11H2z" {...line} strokeWidth="1.500" /><path d="M6.500 8.500h5V10h-5z" /></> },
  { key: "object", color: "text-[#c4814a]", space: "mt-[9px]", art: <><rect x="4" y="4" width="10" height="10" /><path d="M.6 5V.6H5M13 .6h4.400V5M17.400 13v4.400H13M5 17.400H.6V13" {...line} opacity=".6" /></> },
  { key: "modifier", color: "text-[#5b86cf]", art: <path d="M17.500 4.500l-3.500 3-3-1-.8-3L13.500.3c-4-1-8 2-7 6.500L.8 13.500C-1 16.500 2 19 4.500 17.200L11 11.500c4 1 7.500-2.500 6.500-7z" /> },
  { key: "particles", color: "text-[#5b86cf]", art: <><path d="M3 3h12M3.500 3v13M4 4l11 11" {...line} strokeWidth="1.300" opacity=".7" /><circle cx="3" cy="3.500" r="3" /><circle cx="15.500" cy="3" r="2" /><circle cx="3.500" cy="15.500" r="2" /><circle cx="15.500" cy="15.500" r="2.500" /></> },
  { key: "physics", color: "text-[#5b86cf]", art: <><path d="M12.500 2A8 8 0 109 17a8 8 0 007-4.500" {...line} strokeWidth="1.400" opacity=".8" /><circle cx="9" cy="9.500" r="3.700" /><circle cx="15.500" cy="3" r="2.300" opacity=".8" /></> },
  { key: "constraint", color: "text-[#5b86cf]", art: <><path d="M2.500 6.500L12 1.500c3.500-1.500 6 1 5 4L13 14" {...line} strokeWidth="1.400" /><circle cx="7" cy="11" r="6.200" {...line} strokeWidth="1.400" /><circle cx="7" cy="11" r="2.700" {...line} strokeWidth="2.400" /><circle cx="14.500" cy="4" r="1" /></> },
];

function PropertyTabs() {
  return (
    <nav className="flex w-[35px] shrink-0 flex-col bg-[#1c1c1c] pt-[9.500px]">
      {TABS.map((t) => (
        <div key={t.key} className={`flex h-[34.900px] shrink-0 items-center justify-center pl-px ${t.space ?? ""}`}>
          <Icon className={t.color}>{t.art}</Icon>
        </div>
      ))}
      <div className="flex h-[35px] shrink-0 items-center justify-center pl-px">
        <MeshIcon className="text-[#00b07c]" />
      </div>
      <div className="ml-[2px] flex h-[33px] shrink-0 items-center justify-center rounded-l-[5px] bg-[#303030] pr-px">
        <MaterialIcon className="text-[#cc5f68]" />
      </div>
    </nav>
  );
}

function SquareButton({ children, className }: { children: ReactNode; className: string }) {
  return <div className={`flex items-center justify-center ${className}`}>{children}</div>;
}

function Socket({ color }: { color: string }) {
  return (
    <div className="flex size-[23px] shrink-0 items-center justify-center bg-[#282828]">
      <span className={`size-[8px] rounded-full ${color}`} />
    </div>
  );
}

function Field({ label, children, dot = true, className = "mt-[8px]" }: { label?: string; children: ReactNode; dot?: boolean; className?: string }) {
  return (
    <div className={`flex h-[23px] shrink-0 items-center ${className}`}>
      <span className="w-[95.500px] text-right">{label}</span>
      <div className="ml-[12.500px] flex h-[23px] w-[132px] overflow-hidden rounded-[4px]">{children}</div>
      {dot && <span className="ml-[11px] size-[5px] rounded-full bg-[#d8d8d8]" />}
    </div>
  );
}

function GripDots() {
  return (
    <svg width="15" height="6" className="shrink-0">
      <path d="M0 1h15M0 5h15" stroke="#b0b0b0" strokeWidth="1.500" strokeDasharray="1.700 2.600" />
    </svg>
  );
}

function Properties() {
  return (
    <section className="flex h-[637px] flex-col overflow-hidden rounded-t-md bg-[#303030]">
      <div className="flex h-[31px] shrink-0 items-center pl-[10px]">
        <div className="flex h-[24px] w-[40px] items-center gap-[3px] rounded-[4px] border border-[#3d3d3d] bg-[#282828] pl-[4px]">
          <PropertiesIcon />
          <Chevron />
        </div>
        <div className="ml-[38px] flex h-[24px] w-[144px] items-center rounded-[4px] border border-[#3a3a3a] bg-[#1d1d1d] pl-[5px]">
          <Icon><circle cx="11.500" cy="6.500" r="5.500" {...line} strokeWidth="1.500" /><path d="M7.500 10.500L.8 17.200" {...line} strokeWidth="1.700" /></Icon>
        </div>
        <div className="ml-[64px] flex h-[24px] w-[25px] items-center justify-center rounded-[4px] border border-[#3d3d3d] bg-[#282828]">
          <Chevron />
        </div>
      </div>
      <div className="flex min-h-0 flex-1">
        <PropertyTabs />
        <div className="flex min-w-0 flex-1 flex-col pl-[10px] pr-[10px] text-[12.900px]">
          <div className="flex h-[45px] shrink-0 items-center pl-[3px]">
            <ObjectIcon />
            <span className="ml-[11px]">立方体</span>
            <svg width="7" height="12" className="ml-[23px]"><path d="M1 1l5 5-5 5" fill="none" stroke="#e0e0e0" strokeWidth="1.500" /></svg>
            <span className="ml-[12px] flex"><MaterialIcon /></span>
            <span className="ml-[11px]">屏幕</span>
            <Icon className="ml-auto mr-[3px] text-[#a0a0a0]">
              <path d="M11.500.8l5.700 5.700-1.500 1.200-1-.3-3 3.300.3 3-1.500 1.500L3.500 8.500 5 7l3 .3 3.200-3-.5-2zM6.500 11.500L.8 17.200" {...line} />
            </Icon>
          </div>
          <div className="mt-[10.500px] flex shrink-0 gap-[11.500px]">
            <div className="flex h-[148px] w-[241px] flex-col rounded-[4px] border border-[#3f3f3f] bg-[#262626] px-[5.500px] pt-[5px]">
              <div className="flex h-[23px] shrink-0 items-center gap-[11px] pl-[4px] text-[#cccccc]">
                <span className="h-[16px] w-[16px] rounded-full bg-[linear-gradient(95deg,#e8e0c4_0%,#ffffff_25%,#fffbe6_45%,#cfc39a_68%,#4a4536_88%,#262626_100%)]" />
                玫瑰金
              </div>
              <div className="mt-[2px] flex h-[23px] shrink-0 items-center gap-[11px] rounded-[4px] bg-[#4a4b50] pl-[4px] text-white">
                <span className="h-[16px] w-[16px] rounded-full bg-[linear-gradient(95deg,#dcdcdc_0%,#ffffff_22%,#ffffff_48%,#b4b4b6_70%,#5a5b60_90%,#4a4b50_100%)]" />
                屏幕
              </div>
              <div className="mt-auto mb-[8px] flex items-center pl-[7px]">
                <svg width="8" height="8"><path d="M0 0l8 4-8 4z" fill="#a8a8a8" /></svg>
                <span className="ml-[104px] flex"><GripDots /></span>
              </div>
            </div>
            <div className="flex w-[24px] flex-col text-[#e6e6e6]">
              <SquareButton className="h-[23px] rounded-t-[4px] bg-[#545454]"><Icon size={14}><path d="M9 2v14M2 9h14" {...line} strokeWidth="1.900" /></Icon></SquareButton>
              <SquareButton className="mt-px h-[24px] rounded-b-[4px] bg-[#545454]"><Icon size={14}><path d="M2 9h14" {...line} strokeWidth="1.900" /></Icon></SquareButton>
              <SquareButton className="mt-[8px] h-[24px] rounded-[4px] border border-[#3d3d3d] bg-[#262626]"><svg width="13" height="8"><path d="M1.500 1l5 5 5-5" fill="none" stroke="#e0e0e0" strokeWidth="1.500" /></svg></SquareButton>
              <SquareButton className="mt-[9px] h-[23px] rounded-t-[4px] bg-[#545454]"><svg width="10" height="8"><path d="M5 0l5 8H0z" fill="#e6e6e6" /></svg></SquareButton>
              <SquareButton className="mt-px h-[24px] rounded-b-[4px] bg-[#545454]"><svg width="10" height="8"><path d="M5 8l5-8H0z" fill="#e6e6e6" /></svg></SquareButton>
            </div>
          </div>
          <div className="mt-[7px] flex h-[24px] shrink-0 items-center">
            <div className="flex h-full w-[226px] gap-px overflow-hidden rounded-[4px] border border-[#3d3d3d] bg-[#3d3d3d]">
              <div className="flex w-[38px] items-center gap-[4px] bg-[#282828] pl-[5px]"><MaterialIcon /><Chevron /></div>
              <div className="flex w-[111px] items-center bg-[#1d1d1d] pl-[9px]">屏幕</div>
              <SquareButton className="flex-1 bg-[#545454]"><Icon className="text-[#a0a0a0]"><path d="M9 1c2.500 1.800 5 2.300 7.500 2.300 0 6-1.500 11-7.500 14C3 14.300 1.500 9.300 1.500 3.300 4 3.300 6.500 2.800 9 1z" {...line} strokeWidth="1.300" /></Icon></SquareButton>
              <SquareButton className="flex-1 bg-[#545454]"><Icon><path d="M5.500.8h7.500l4.200 4V13H5.500zM5 5H1v12h11v-3.500" {...line} strokeWidth="1.300" /><path d="M12 0v6h6z" /></Icon></SquareButton>
              <SquareButton className="flex-1 bg-[#545454]"><svg width="11" height="11"><path d="M1 1l9 9M10 1l-9 9" stroke="#e0e0e0" strokeWidth="1.500" /></svg></SquareButton>
            </div>
            <div className="ml-auto flex h-full w-[39px] items-center gap-[3px] rounded-[4px] border border-[#3d3d3d] bg-[#282828] pl-[5px]"><MeshIcon /><Chevron /></div>
          </div>
          <div className="mt-[7px] flex h-[23px] shrink-0 gap-px overflow-hidden rounded-[4px] bg-[#3a3a3a]">
            {["指定", "选择", "弃选"].map((t) => (
              <div key={t} className="flex flex-1 items-center justify-center bg-[#545454] pr-[2px]">{t}</div>
            ))}
          </div>
          <div className="mt-[13px] flex h-[31px] shrink-0 items-center rounded-[4px] bg-[#3d3d3d] pl-[13px] pr-[9px]">
            <svg width="7" height="12"><path d="M1 1l5 5-5 5" fill="none" stroke="#b8b8b8" strokeWidth="1.300" /></svg>
            <span className="ml-[8px] flex-1">预览</span>
            <GripDots />
          </div>
          <div className="mt-[3px] flex min-h-0 flex-1 flex-col overflow-hidden rounded-t-[4px] bg-[#3d3d3d]">
            <div className="flex h-[31px] shrink-0 items-center pl-[10px] pr-[9px]">
              <svg width="12" height="7"><path d="M1 1l5 5 5-5" fill="none" stroke="#b8b8b8" strokeWidth="1.300" /></svg>
              <span className="ml-[6px] flex-1">表(曲)面</span>
              <GripDots />
            </div>
            <div className="ml-[10.500px] mr-[11px] mt-[10px] flex h-[23px] shrink-0 items-center rounded-[4px] bg-[#4772b3] pl-[5px] text-white">
              <NodesIcon />
              <span className="flex-1 text-center">使用节点</span>
            </div>
            <Field label="表(曲)面" dot={false} className="mt-[21px]">
              <Socket color="bg-[#63c763]" />
              <div className="flex flex-1 items-center bg-[#282828] pl-[3px]">原理化BSDF</div>
            </Field>
            <Field className="mt-[21px]">
              <div className="flex flex-1 items-center justify-between bg-[#282828] pl-[9px] pr-[3px] text-[12.400px]">GGX<Chevron /></div>
            </Field>
            <Field>
              <div className="flex flex-1 items-center justify-between bg-[#282828] pl-[9px] pr-[3px]">随机游走<Chevron /></div>
            </Field>
            <Field label="基础色">
              <Socket color="bg-[#c7c729]" />
              <div className="ml-px flex-1 bg-[#e7e7e7]" />
            </Field>
            <Field label="次表面">
              <Socket color="bg-[#a1a1a1]" />
              <div className="ml-px flex flex-1 items-center justify-center bg-[#545454] text-[12.500px]">0.000</div>
            </Field>
            <Field label="次表面半径">
              <Socket color="bg-[#6363c7]" />
              <div className="ml-[9px] flex flex-1 items-center justify-center rounded-t-[4px] bg-[#545454] text-[12.500px]">1.000</div>
            </Field>
            <Field className="mt-px">
              <div className="ml-[32px] flex flex-1 items-center justify-center bg-[#545454] text-[12.500px]">0.200</div>
            </Field>
          </div>
        </div>
      </div>
    </section>
  );
}

/* ---------- status bar ---------- */

function Mouse({ part, drag }: { part: "l" | "m" | "r"; drag?: boolean }) {
  return (
    <svg width="20" height="20" viewBox="0 0 20 20" className="shrink-0 text-[#8c8c8c]">
      <rect x="0.700" y="1.700" width="12.600" height="17" rx="4" fill="none" stroke="currentColor" strokeWidth="1.200" />
      {part === "l" && <path d="M0 9V5a4 4 0 014-4h2v8z" fill="currentColor" />}
      {part === "r" && <path d="M14 9V5a4 4 0 00-4-4H8v8z" fill="currentColor" />}
      {part === "m" && <rect x="4.800" y="4" width="4.400" height="8" rx="1" fill="currentColor" />}
      {drag && <path d="M15.500 1c1.500 2 1.500 5 0 7M18.500 3v6" fill="none" stroke="currentColor" />}
    </svg>
  );
}

function StatusBar() {
  return (
    <div className="flex h-[26px] shrink-0 items-center bg-[#1c1c1c] pl-[15px] text-[12.900px] text-[#8c8c8c]">
      <div className="flex w-[94px] items-center gap-[8px]"><Mouse part="l" />改变帧数</div>
      <div className="flex w-[187px] items-center gap-[10px]"><Mouse part="l" drag />框选</div>
      <div className="flex w-[281px] items-center gap-[8px]"><Mouse part="m" />平移视图</div>
      <div className="flex items-center gap-[8px]"><Mouse part="r" />动画摄影表上下文菜单</div>
    </div>
  );
}

/* ---------- Windows taskbar ---------- */

function SogouMark({ size }: { size: number }) {
  return (
    <svg width={size} height={size} viewBox="0 0 40 38" className="shrink-0">
      <path d="M1 9Q.5 6 3.500 5L29 0q3-.5 4 2.500l6 26q.5 3-2.500 4L12 38q-3 .5-4-2.500z" fill="#f4531b" />
      <path d="M31.500 9.500C22 6 9 8.500 9 14c0 6.500 21 3 21 10 0 6-13 8-22 4.500" fill="none" stroke="#fff" strokeWidth="5.500" transform="translate(.5 0)" />
    </svg>
  );
}

function Bird() {
  return (
    <svg width="92" height="45" viewBox="0 0 92 45" className="shrink-0">
      <g fill="none" stroke="#c79a35" strokeWidth="1.200">
        <path d="M12 20c12 5 20 14 28 26M8 38c8-3 15 2 20 8M74 5C66 20 60 30 55 46M86 12c-8 8-14 20-16 34M66 26c4 6 8 12 10 20" />
      </g>
      <g fill="#dcb84c" stroke="#c09030" strokeWidth=".5">
        <ellipse cx="12" cy="21" rx="5" ry="1.600" transform="rotate(30 12 21)" />
        <ellipse cx="18" cy="28" rx="6" ry="1.600" transform="rotate(-10 18 28)" />
        <ellipse cx="12" cy="28" rx="6" ry="1.600" transform="rotate(10 12 28)" />
        <ellipse cx="20" cy="22" rx="5" ry="1.600" transform="rotate(60 20 22)" />
        <ellipse cx="6" cy="36" rx="5" ry="1.600" />
        <ellipse cx="8" cy="39" rx="5" ry="1.600" transform="rotate(-30 8 39)" />
        <ellipse cx="74" cy="8" rx="5" ry="1.600" transform="rotate(-60 74 8)" />
        <ellipse cx="79" cy="6" rx="5" ry="1.600" transform="rotate(-40 79 6)" />
        <ellipse cx="72" cy="14" rx="5" ry="1.600" transform="rotate(50 72 14)" />
        <ellipse cx="78" cy="13" rx="5" ry="1.600" transform="rotate(-20 78 13)" />
        <ellipse cx="88" cy="14" rx="4" ry="1.600" transform="rotate(-50 88 14)" />
      </g>
      <path d="M32 6c8-2 20 4 28 16l31 2v5l-30 1c-8 5-18 6-26-2z" fill="#cb8a55" />
      <path d="M26 16c2 14 10 23 20 22 8-1 13-5 16-10L36 16z" fill="#a9552a" />
      <path d="M36 15c8-1 20 0 28 9-8 3-22 2-28-4z" fill="#4b3638" />
      <path d="M38 17c6-1 15 1 20 4-8 1-17 0-20-4z" fill="#d8b8a8" />
      <path d="M60 23l31 1v3H62z" fill="#7d4030" />
      <path d="M19 8C21 1 30 0 35 5c2 8 0 16-6 20-5-3-9-9-10-17z" fill="#b9cddd" />
      <path d="M21 6c2-2 5-2 7 0 0 4-1 6-2 9-3-2-4-5-5-9z" fill="#20252d" />
      <circle cx="24.500" cy="6.500" r="1.200" fill="#f0a030" />
      <path d="M15.500 9.500l5-4 .5 6z" fill="#f59b3c" />
      <path d="M37 36l-5 3M45 38l-6 7M35 41l8-2" stroke="#3a2f2a" strokeWidth="1.400" />
      <path d="M57 1l2 3 4-1-2 4 2 3-4-1-3 3v-4l-4-2 4-1z" fill="#e07cf4" />
      <circle cx="3" cy="16" r="2.700" fill="#4fd37a" />
      <circle cx="89" cy="7" r="2.500" fill="#62d5e8" />
    </svg>
  );
}

const APPS: { key: string; art: ReactNode; run?: boolean; active?: boolean }[] = [
  { key: "folder", art: <><path d="M2 4h11l2 3H2z" fill="#d9960b" /><path d="M2 7h11l2-1h14v20H2z" fill="#ffd262" /><path d="M7 26V17q0-2 2-2h13q2 0 2 2v9h-5v-5h-7v5z" fill="#3b96db" /></> },
  { key: "wps", art: <><rect x="1.500" y="1" width="27" height="28" rx="4" fill="#2d83f7" /><path d="M6.500 9.500h7M8 9.500l4 11 4.500-11 4 11L24 9.500M17.500 9.500H24" fill="none" stroke="#fff" strokeWidth="2" /></> },
  { key: "edge", run: true, art: <><circle cx="15" cy="15" r="15" fill="#0f6dbd" /><path d="M1 11C3 3 9 0 15 0c9 0 15 6 15 13 0 5-4 7-8 7-3 0-4-1-4-2s1-1 1-4-3-6-8-6S3 11 1 15z" fill="#35bfc9" /><path d="M21 1.300C27 4 30 8 30 13c0 5-4 7-8 7-3 0-4-1-4-2 4-3 6-10 3-16.700z" fill="#52d374" /><path d="M11 8c4 0 8 3 8 6-2-2-5-1-6 2-1 5 4 9 9 9 2 0 4-.5 5.500-1.500C24 29 18 31 12 29.500 6 27 5 19 8 14z" fill="#0c4b98" /><path d="M18.500 14c-3-1-5 2-4 5s4 5 8 4.500 5-1.500 5.500-1c.8-2 1.500-4 1.500-4-2 2-5 2.500-8 2-3-.8-4-2-3-3z" fill="#dcd9d6" opacity=".9" /></> },
  { key: "mail", art: <><path d="M0 11L15 1l15 10v3H0z" fill="#0a569e" /><path d="M2 11h26v9H2z" fill="#e9e9ea" /><path d="M0 11l15 9.500L30 11v18H0z" fill="#2fb6ef" /><path d="M0 29h30L15 20z" fill="#1a93dc" opacity=".8" /></> },
  { key: "hao", art: <><rect width="30" height="30" fill="#fff" /><text x="15" y="15" textAnchor="middle" fontSize="13" fontWeight="600" fontFamily="Open Sans, sans-serif" textLength="22" fill="#3c9b2f">hảo</text><text x="15" y="25" textAnchor="middle" fontSize="10" fontWeight="700" fontFamily="Open Sans, sans-serif" textLength="15" fill="#ef7d1a">123</text></> },
  { key: "du", art: <><rect width="30" height="30" fill="#fbfbfb" /><g fill="#1d6fd0"><ellipse cx="7" cy="11" rx="3" ry="4" /><ellipse cx="12" cy="5.500" rx="3" ry="4" /><ellipse cx="19" cy="5.500" rx="3" ry="4" /><ellipse cx="24" cy="11" rx="3" ry="4" /><path d="M15 12c5 0 6 4 9 7s1 7-3 7H9c-4 0-6-4-3-7s4-7 9-7z" fill="#1552b8" /></g><text x="15" y="24" textAnchor="middle" fontSize="11" fontWeight="700" fontFamily="Open Sans, sans-serif" fill="#fff">du</text><path d="M9 28h6v2H9z" fill="#e0242c" /><path d="M15 28h6v2h-6z" fill="#2b7fd8" /></> },
  { key: "blender", run: true, active: true, art: <g fill="none" stroke="#ea7f12"><circle cx="19" cy="17" r="8" strokeWidth="4.200" /><path d="M2 21L16 10M5 11h12M13 5l10 7" strokeWidth="3" strokeLinecap="round" /><circle cx="19" cy="17" r="6.200" fill="#fff" stroke="none" /><circle cx="19" cy="17" r="3.800" fill="#245a91" stroke="none" /></g> },
  { key: "typora", run: true, art: <><rect x="3" y="3" width="24" height="24" rx="3" fill="#e6e6e6" transform="rotate(7 15 15)" /><rect x="3" y="2.500" width="24" height="24" rx="3" fill="#f7f7f7" stroke="#ddd" strokeWidth=".5" /><text x="15" y="20" textAnchor="middle" fontSize="15" fontFamily="Liberation Serif, serif" fill="#222">T</text></> },
];

function Taskbar() {
  return (
    <footer className="flex h-[48px] shrink-0 items-center bg-[linear-gradient(90deg,#d9dadb_0%,#dcdad7_25%,#e0dbd3_31%,#d9d8d7_36%,#e3d6d0_40%,#d9d8d7_50%,#d7d7d7_70%,#e0ddd8_82%,#deddd8_100%)] font-['Open_Sans','Noto_Sans_CJK_SC',sans-serif] text-black">
      <svg width="20" height="20" viewBox="0 0 20 20" className="ml-[20px] mt-[2px] shrink-0"><path d="M0 2.800L8.500 1.600v8H0zM9.500 1.400L20 0v9.600H9.500zM0 10.600h8.500v8L0 17.400zM9.500 10.600H20V20L9.500 18.600z" /></svg>
      <div className="ml-[20px] flex h-[48px] w-[429px] shrink-0 items-center border-x border-t border-[#c8c8c8] bg-white pl-[14px]">
        <svg width="21" height="21" viewBox="0 0 21 21" className="shrink-0"><circle cx="13" cy="7.500" r="6.500" fill="none" stroke="#111" strokeWidth="1.500" /><path d="M8.500 12.500L.8 20.200" stroke="#111" strokeWidth="1.500" /></svg>
        <span className="ml-[14px] mt-[2px] whitespace-nowrap text-[19px] font-light leading-none text-[#111]">在这里输入你要搜索的内容</span>
        <span className="ml-auto mr-[3px] flex self-end"><Bird /></span>
      </div>
      <svg width="20" height="20" className="ml-[21px] mt-px shrink-0"><circle cx="10" cy="10" r="8.500" fill="none" stroke="#111" strokeWidth="2.600" /></svg>
      <svg width="20" height="20" viewBox="0 0 20 20" className="ml-[40px] shrink-0" fill="none" stroke="#111" strokeWidth="1.300"><path d="M.7 0v4H13V0M.7 5.500H13v9H.7zM.7 20v-4H13v4M18.500 0v5M18.500 10v10" /><path d="M17 6h3v3h-3z" fill="#111" stroke="none" /></svg>
      <div className="ml-[22.500px] flex h-full">
        {APPS.map((a) => (
          <div key={a.key} className="flex w-[62px] items-center justify-center">
            <div className={`relative flex h-full items-center justify-center pt-[2px] ${a.active ? "w-[61px] bg-[#f1f0ef]" : "w-[51px]"} ${a.run ? "shadow-[inset_0_-1.500px_0_#0f78cc]" : ""}`}>
              <svg width="30" height="30" viewBox="0 0 30 30">{a.art}</svg>
            </div>
          </div>
        ))}
      </div>
      <svg width="27" height="20" viewBox="0 0 27 20" className="ml-auto shrink-0"><path d="M6 19a5.500 5.500 0 01-.5-11A8 8 0 0120 5.500 6.500 6.500 0 0126.500 13c0 4-3 6-6.500 6z" fill="#a9d4f5" /><path d="M14 1c5-2 11 1 12.500 8l-3-.5C22 5 19 3 14 3z" fill="#5aa0e0" /><path d="M6 18a4.500 4.500 0 010-8.500c3 0 5 1.500 6 4z" fill="#d6ecfb" /></svg>
      <span className="ml-[11px] mt-[2px] w-[77px] whitespace-nowrap text-[19.200px] font-light leading-none [word-spacing:3px]">9°C 多云</span>
      <svg width="16" height="9" className="ml-[20px] shrink-0"><path d="M.7 8.500L8 1.200l7.300 7.300" fill="none" stroke="#111" strokeWidth="1.400" /></svg>
      <svg width="17" height="17" viewBox="0 0 17 17" className="ml-[14px] mt-[2px] shrink-0" fill="none" stroke="#222" strokeWidth="1.200"><path d="M1 16C1 8 8 1 16 1M4.500 16C4.500 10 10 4.500 16 4.500M8 16c0-4 4-8 8-8" /><circle cx="14" cy="14" r="1.500" fill="#222" /></svg>
      <svg width="21" height="16" viewBox="0 0 21 16" className="ml-[10px] shrink-0"><path d="M6 4h13v9H4V9" fill="none" stroke="#000" strokeWidth="1.300" /><path d="M6 5.500h11.500v6H6zM19 6.500h2v4h-2zM0 2h5v3L3.500 7h-2L0 5zM1 0h1v2H1zM3.200 0h1v2h-1z" /></svg>
      <svg width="22" height="18" viewBox="0 0 22 18" className="ml-[9px] shrink-0" fill="none" stroke="#222" strokeWidth="1.300"><path d="M1 6h3l5-4.500v15L4 12H1zM12 6.500c1 1.500 1 3.500 0 5M14.500 4.500c2 2.500 2 6.500 0 9" /><path d="M17.500 2c3.500 4 3.500 10 0 14" stroke="#888" /></svg>
      <svg width="18" height="18" viewBox="0 0 18 18" className="ml-[9px] shrink-0" fill="none" stroke="#222" strokeWidth="1.100"><path d="M7.300.6h3.400v3.200h6.700v9h-6.700v4.600H7.300v-4.600H.6v-9h6.700zM3.800 6.800h3.500v3H3.800zM10.700 6.800h3.500v3h-3.500z" /></svg>
      <span className="ml-[17px] mt-[2px] flex"><SogouMark size={21} /></span>
      <div className="ml-[19px] flex w-[80px] flex-col items-center text-[15.600px] leading-[23px]"><span>9:33</span><span>2022/8/28</span></div>
      <div className="relative ml-[21px] h-[38px] w-[30px] shrink-0">
        <svg width="30" height="38" viewBox="0 0 30 38"><path d="M0 10h20v15h-5l-4 4v-4H0z" /><path d="M4 14h12M4 17.500h12M4 21h8" stroke="#ddd" strokeWidth="1.200" /><circle cx="20" cy="29.500" r="9.300" fill="#deddd8" fillOpacity=".85" stroke="#555" strokeWidth="1.200" /><text x="20" y="34.500" textAnchor="middle" fontSize="14" fontWeight="700" fontFamily="Open Sans, sans-serif">1</text></svg>
      </div>
      <div className="ml-[15px] mr-[5px] h-full w-px bg-[#a8a8a6]" />
    </footer>
  );
}

/* ---------- floating windows ---------- */

function ImeBar() {
  return (
    <div className="absolute left-[1697px] top-[814px] flex h-[32px] w-[220px] items-center border border-[#b9cfe6] bg-white text-[#0a6fd8]">
      <div className="-ml-[3px] -mt-[6px]"><SogouMark size={40} /></div>
      <svg width="18" height="18" viewBox="0 0 18 18" className="ml-[8px] mt-[2px]" fill="none" stroke="currentColor" strokeWidth="2.200"><path d="M1.200 4H16.800V11.500H1.200zM9 0v17" /></svg>
      <svg width="16" height="16" viewBox="0 0 16 16" className="ml-[13px]" fill="currentColor"><circle cx="3" cy="4" r="2.300" /><path d="M10 8.500c2-1 4.500 0 4.500 2.500s-1.500 4-3.500 4.500c.8-1 1.200-1.800 1-2.500-2.500 0-3.500-3.500-2-4.500z" /></svg>
      <svg width="16" height="20" viewBox="0 0 16 20" className="ml-[14px]" fill="currentColor"><rect x="4.500" y="0" width="7" height="13" rx="3.500" /><path d="M1 9c1 9 13 9 14 0M8 15v2M5 19h6" fill="none" stroke="currentColor" strokeWidth="2" /></svg>
      <svg width="19" height="16" viewBox="0 0 19 16" className="ml-[12px]"><rect x="1" y="1" width="17" height="14" rx="1" fill="none" stroke="currentColor" strokeWidth="1.800" /><path d="M4 4.500h11M4 7.500h11" stroke="currentColor" strokeWidth="2" strokeDasharray="2 1" /><path d="M6 11.500h7" stroke="currentColor" strokeWidth="2" /></svg>
      <svg width="20" height="18" viewBox="0 0 20 18" className="ml-[11px]" fill="currentColor"><path d="M6 0c1.500 2 6.500 2 8 0l6 3-1.500 5L16 7v11H4V7l-2.500 1L0 3z" /></svg>
      <div className="ml-auto flex h-full w-[31px] items-center justify-center bg-[linear-gradient(100deg,#fdf6e0,#d8f5f6,#f6e3fb)]">
        <svg width="17" height="18" viewBox="0 0 17 18"><path d="M4 .5q4 0 4 4V8H4Q0 8 0 4.300T4 .5z" fill="#6a58e8" /><circle cx="12.800" cy="4.300" r="2.800" fill="none" stroke="#4a6cf0" strokeWidth="2" /><path d="M4 17.500q4 0 4-4V9.800H4q-4 0-4 3.800t4 3.900z" fill="#b2609c" /><path d="M13 17.500q-4 0-4-4V9.800h4q4 0 4 3.800t-4 3.900z" fill="#7a5be0" /></svg>
      </div>
    </div>
  );
}

function VolumeMeter() {
  return (
    <div className="absolute left-[1908px] top-[136px] flex h-[72px] w-[12px] flex-col rounded-l-[5px] border border-[#202338] bg-[#353a54] pl-[3px] pt-[7px]">
      <div className="h-[15px] w-[6px] bg-[repeating-linear-gradient(#1c2036_0_1px,#353a54_1px_3px)]" />
      <div className="h-[42px] w-[6px] bg-[linear-gradient(#c8a93c,#a9c24a_40%,#5cc17c_75%,#2fb9a0)]">
        <div className="h-full w-full bg-[repeating-linear-gradient(transparent_0_1.500px,#353a54cc_1.500px_2.500px)]" />
      </div>
    </div>
  );
}

function Annotations() {
  return (
    <svg width="1920" height="894" className="pointer-events-none absolute left-0 top-0">
      <g fill="none" stroke="#ffadc8" strokeWidth="2">
        <rect x="4" y="462" width="60" height="38" />
        <rect x="6" y="683" width="230" height="45" />
        <rect x="1637" y="559" width="279" height="41" />
      </g>
      <g stroke="#ffadc8" strokeWidth="3.600" strokeLinecap="round">
        <path d="M389 408L82 471.500M536 609L262 675.500M1405 408.500L1620 564" />
      </g>
      <g fill="#ffadc8">
        <path d="M67 474.500L85 464 82 471.500 88 483.500z" />
        <path d="M247 679L264 667.500 262 675.500 268 681.500z" />
        <path d="M1631 572L1619.500 555 1619 563 1612 567z" />
      </g>
    </svg>
  );
}

export default function App() {
  return (
    <div className="relative flex h-[894px] w-[1920px] flex-col overflow-hidden bg-[#161616] font-['DejaVu_Sans','Noto_Sans_CJK_SC',sans-serif] leading-none text-[#e2e2e2]">
      <div className="flex h-[820px] shrink-0 gap-[3px]">
        <div className="flex w-[1585px] shrink-0 flex-col gap-[3px]">
          <Viewport />
          <section className="ml-px flex h-[361px] w-[1584px] flex-col overflow-hidden rounded-md">
            <TimelineHeader />
            <TimelineTracks />
          </section>
        </div>
        <div className="flex w-[331px] shrink-0 flex-col gap-[3px]">
          <Outliner />
          <Properties />
        </div>
      </div>
      <StatusBar />
      <Taskbar />
      <svg width="7" height="12" className="absolute left-px top-[511px]"><path d="M1 2l4 4-4 4" fill="none" stroke="#8c8c8c" strokeWidth="1.300" /></svg>
      <svg width="7" height="12" className="absolute left-[1578px] top-[511px]"><path d="M5 2L1 6l4 4" fill="none" stroke="#8c8c8c" strokeWidth="1.300" /></svg>
      <EditorMenu />
      <Annotations />
      <div className="absolute left-[67px] top-[731px] flex h-[58px] w-[128px] flex-col gap-[7.500px] rounded-[4px] bg-[#191919] pl-[16px] pt-[14px] text-[12.900px] shadow-[0_1px_5px_rgba(0,0,0,.7)]">
        <span>着色器节点.</span>
        <span className="whitespace-nowrap text-[12.700px] text-[#b4b4b4]">快捷键: Shift F3</span>
      </div>
      <VolumeMeter />
      <ImeBar />
    </div>
  );
}
